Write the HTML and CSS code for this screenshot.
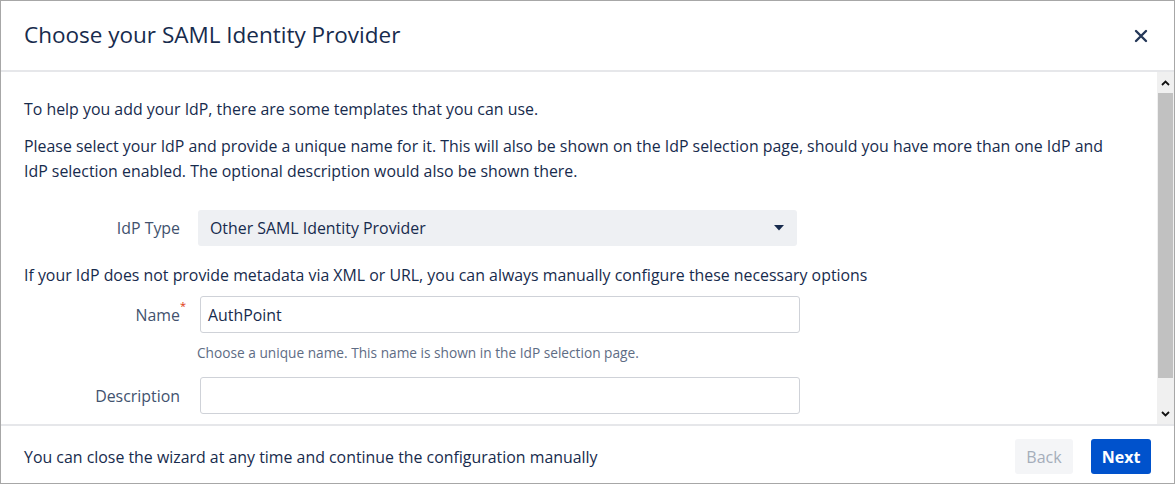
FILE: index.html
```html
<!DOCTYPE html>
<html lang="en">
<head>
<meta charset="utf-8">
<title>Choose your SAML Identity Provider</title>
<link rel="stylesheet" href="styles.css">
</head>
<body>
<div class="dialog">
  <header class="dialog-header">
    <h1 class="dialog-title">Choose your SAML Identity Provider</h1>
    <button class="close-btn" aria-label="Close">
      <svg width="14" height="14" viewBox="0 0 14 14"><path d="M2 2 L12 12 M12 2 L2 12" stroke="#253858" stroke-width="2.4" stroke-linecap="round" fill="none"/></svg>
    </button>
  </header>
  <div class="dialog-body">
    <div class="content">
      <p class="intro">To help you add your IdP, there are some templates that you can use.</p>
      <p class="intro2">Please select your IdP and provide a unique name for it. This will also be shown on the IdP selection page, should you have more than one IdP and IdP selection enabled. The optional description would also be shown there.</p>
      <div class="field-row select-row">
        <label class="field-label">IdP Type</label>
        <div class="select">
          <span>Other SAML Identity Provider</span>
          <svg width="10" height="6" viewBox="0 0 10 6"><path d="M0 0 H10 L5 5.5 Z" fill="#172b4d"/></svg>
        </div>
      </div>
      <p class="manual-note">If your IdP does not provide metadata via XML or URL, you can always manually configure these necessary options</p>
      <div class="field-row name-row">
        <label class="field-label">Name<span class="req">*</span></label>
        <div class="input">AuthPoint</div>
      </div>
      <div class="help">Choose a unique name. This name is shown in the IdP selection page.</div>
      <div class="field-row desc-row">
        <label class="field-label">Description</label>
        <div class="input"></div>
      </div>
    </div>
    <div class="scrollbar">
      <div class="sb-arrow"><svg width="9" height="6" viewBox="0 0 9 6"><path d="M1 5 L4.5 1.5 L8 5" stroke="#111" stroke-width="1.8" fill="none"/></svg></div>
      <div class="sb-track"><div class="sb-thumb"></div></div>
      <div class="sb-arrow"><svg width="9" height="6" viewBox="0 0 9 6"><path d="M1 1 L4.5 4.5 L8 1" stroke="#111" stroke-width="1.8" fill="none"/></svg></div>
    </div>
  </div>
  <footer class="dialog-footer">
    <span class="footer-text">You can close the wizard at any time and continue the configuration manually</span>
    <div class="buttons">
      <button class="btn btn-back" disabled>Back</button>
      <button class="btn btn-next">Next</button>
    </div>
  </footer>
</div>
</body>
</html>
```

FILE: styles.css
```css
* { box-sizing: border-box; }
html, body { margin: 0; padding: 0; background: #fff; }
body {
  font-family: "Open Sans", "Noto Sans", "Liberation Sans", sans-serif;
  color: #172b4d;
  font-size: 15.9px;
}
.dialog {
  width: 1175px;
  height: 484px;
  border: 1px solid #a7a7a7;
  display: flex;
  flex-direction: column;
  overflow: hidden;
}
.dialog-header {
  height: 71px;
  flex: none;
  display: flex;
  align-items: center;
  justify-content: space-between;
  padding: 0 26px 0 23px;
  border-bottom: 2px solid #e6e7ea;
}
.dialog-title {
  margin: 0;
  font-weight: 400;
  font-size: 22.5px;
  color: #172b4d;
  padding-bottom: 2px;
}
.close-btn {
  border: 0;
  background: none;
  padding: 0;
  width: 14px;
  height: 14px;
  display: flex;
}
.dialog-body {
  flex: none;
  height: 354px;
  display: flex;
  border-bottom: 2px solid #e6e7ea;
}
.content {
  flex: 1;
  padding: 0 30px 0 23px;
  overflow: hidden;
}
p { margin: 0; line-height: 25px; }
.intro { margin-top: 25px; }
.intro2 { margin-top: 12px; }
.field-row {
  display: grid;
  grid-template-columns: 156px 602px;
  column-gap: 18px;
  align-items: center;
}
.select-row { margin-top: 26px; }
.field-label {
  text-align: right;
  color: #42526e;
  position: relative;
  white-space: nowrap;
}
.req {
  position: absolute;
  right: -6px;
  top: -5px;
  color: #de350b;
  font-size: 11px;
  line-height: 14px;
}
.select {
  height: 36px;
  width: 599px;
  background: #eef0f3;
  border-radius: 3px;
  display: flex;
  align-items: center;
  justify-content: space-between;
  padding: 0 13px 0 12px;
}
.manual-note { margin-top: 17px; }
.name-row { margin-top: 8px; }
.input {
  height: 37px;
  width: 600px;
  margin-left: 2px;
  border: 1.5px solid #cfd2d8;
  border-radius: 3px;
  display: flex;
  align-items: center;
  padding: 0 7px;
}
.help {
  margin-top: 10px;
  margin-left: 173px;
  font-size: 13.7px;
  color: #5e6c84;
  line-height: 20px;
  white-space: nowrap;
}
.desc-row { margin-top: 14px; }
.scrollbar {
  width: 17px;
  flex: none;
  background: #f0f0f0;
  display: flex;
  flex-direction: column;
}
.sb-arrow {
  height: 21px;
  display: flex;
  align-items: center;
  justify-content: center;
  flex: none;
}
.sb-track { flex: 1; padding: 0 1px; }
.sb-thumb { height: 285px; background: #c1c1c1; }
.dialog-footer {
  flex: 1;
  display: flex;
  align-items: center;
  justify-content: space-between;
  padding: 4px 23px 0 23px;
}
.buttons { display: flex; gap: 18px; }
.btn {
  height: 35px;
  border: 0;
  border-radius: 3px;
  font-family: inherit;
  font-size: 16px;
  padding: 0;
}
.btn-back { background: #f4f5f7; color: #a5adba; width: 58px; }
.btn-next { background: #0052cc; color: #fff; font-weight: 700; width: 60px; }
```
